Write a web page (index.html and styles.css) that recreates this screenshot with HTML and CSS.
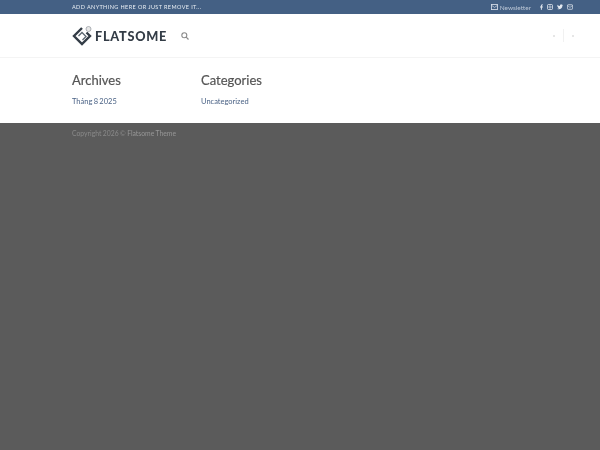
FILE: index.html
```html
<!DOCTYPE html>
<html lang="vi">
<head>
    <meta charset="UTF-8">
    <meta name="viewport" content="width=device-width, initial-scale=1.0">
    <title>Flatsome</title>
    <link rel="stylesheet" href="styles.css">
</head>
<body>
    <div class="top-bar">
        <div class="container top-inner">
            <span class="top-text">ADD ANYTHING HERE OR JUST REMOVE IT...</span>
            <div class="top-links">
                <svg class="top-icon" viewBox="0 0 8 7"><rect x="0.5" y="0.5" width="7" height="6" fill="none" stroke="currentColor"/><path d="M0.5 1.5 4 4 7.5 1.5" fill="none" stroke="currentColor" stroke-width="0.8"/></svg>
                <span class="newsletter">Newsletter</span>
                <div class="socials">
                    <svg class="social fb" viewBox="0 0 4 7"><path d="M1.2 7V4H0V2.8h1.2V1.7C1.2.6 1.9 0 2.8 0H4v1.2H3.2c-.5 0-.7.2-.7.7v.9H4L3.8 4H2.5v3z" fill="currentColor"/></svg>
                    <svg class="social" viewBox="0 0 7 7"><rect x="0.5" y="0.5" width="6" height="6" rx="1.5" fill="none" stroke="currentColor"/><circle cx="3.5" cy="3.5" r="1.3" fill="none" stroke="currentColor" stroke-width="0.8"/></svg>
                    <svg class="social" viewBox="0 0 8 7"><path d="M8 1c-.3.1-.6.2-.9.2.3-.2.6-.5.7-.9-.3.2-.6.3-1 .4A1.6 1.6 0 0 0 4 2.2C2.700 2.100 1.500 1.500.6.4c-.4.700-.2 1.600.5 2.100-.3 0-.5-.1-.7-.2 0 .8.5 1.400 1.300 1.600-.2.1-.5.1-.7 0 .2.600.8 1.100 1.500 1.100C1.800 5.600 1 5.900 0 5.800 3.400 7.900 7.300 5.500 7.200 1.800c.3-.2.600-.5.800-.8z" fill="currentColor"/></svg>
                    <svg class="social" viewBox="0 0 8 7"><rect x="0.5" y="0.5" width="7" height="6" rx="1" fill="none" stroke="currentColor"/><path d="M0.5 1.500 4 4 7.500 1.500" fill="none" stroke="currentColor" stroke-width="0.8"/></svg>
                </div>
            </div>
        </div>
    </div>

    <header class="header">
        <div class="container header-inner">
            <div class="logo">
                <svg class="logo-mark" viewBox="0 0 22 22">
                    <path d="M10 3 2 11l8 8 8-8-3.500-3.500" fill="none" stroke="#333c46" stroke-width="2.400"/>
                    <path d="M6.500 11 10 7.500l4 4-3.500 3.500" fill="none" stroke="#5a6570" stroke-width="1.300"/>
                    <circle cx="16.500" cy="4" r="2.500" fill="#e8e8e8" stroke="#9aa0a6" stroke-width="0.800"/>
                </svg>
                <span class="logo-text">FLATSOME</span>
            </div>
            <svg class="search" viewBox="0 0 8 8"><circle cx="3.300" cy="3.300" r="2.500" fill="none" stroke="#8a8a8a" stroke-width="1.100"/><path d="M5.200 5.200 7.500 7.500" stroke="#8a8a8a" stroke-width="1.200"/></svg>
            <div class="header-right">
                <span class="dot"></span>
                <span class="divider"></span>
                <span class="dot"></span>
            </div>
        </div>
    </header>

    <main class="container widgets">
        <section class="widget">
            <h3>Archives</h3>
            <a href="#">Tháng 8 2025</a>
        </section>
        <section class="widget">
            <h3>Categories</h3>
            <a href="#">Uncategorized</a>
        </section>
    </main>

    <footer class="footer">
        <div class="container">
            <p>Copyright 2026 © <span class="footer-name">Flatsome Theme</span></p>
        </div>
    </footer>
</body>
</html>
```
FILE: styles.css
```css
* { box-sizing: border-box; }
html, body { height: 100%; }
body {
    margin: 0;
    display: flex;
    flex-direction: column;
    background-color: #5b5b5b;
    font-family: Lato, "Liberation Sans", sans-serif;
}
.container { width: 100%; padding: 0 27px 0 72px; }

.top-bar { height: 14px; background-color: #446084; color: #fff; }
.top-inner { height: 14px; display: flex; align-items: center; justify-content: space-between; filter: blur(0.4px); }
.top-text { font-size: 5.500px; font-weight: 400; letter-spacing: 0.400px; color: #e8edf3; }
.top-links { display: flex; align-items: center; color: #d5dde7; }
.top-icon { width: 7px; height: 6px; margin-right: 2px; }
.newsletter { font-size: 6.500px; color: #b9c5d5; margin-right: 9px; }
.socials { display: flex; align-items: center; gap: 4px; color: #e3e8ef; }
.social { width: 6px; height: 6px; }
.social.fb { width: 3px; }

.header { height: 44px; background-color: #fff; border-bottom: 1px solid #f4f4f4; }
.header-inner { height: 43px; display: flex; align-items: center; filter: blur(0.4px); }
.logo { display: flex; align-items: center; gap: 1px; }
.logo-mark { width: 22px; height: 22px; }
.logo-text { font-size: 12.700px; font-weight: 900; letter-spacing: 0.750px; color: #333c46; }
.search { width: 8px; height: 8px; margin-left: 14px; }
.header-right { margin-left: auto; margin-right: -1px; display: flex; align-items: center; gap: 8px; }
.dot { width: 2px; height: 2px; background-color: #e6e6e6; }
.divider { width: 1px; height: 13px; background-color: #f1f1f1; }

.widgets { display: flex; padding-top: 14px; background-color: #fff; height: 65px; }
.widget { width: 129px; filter: blur(0.4px); }
.widget h3 { margin: 0 0 9px; font-size: 13px; line-height: 16px; font-weight: 400; color: #555; -webkit-text-stroke: 0.200px #555; }
.widget a { display: block; font-size: 7.500px; line-height: 10px; word-spacing: -0.600px; color: #4a6285; text-decoration: none; }

.footer { flex: 1; background-color: #5b5b5b; padding-top: 6px; }
.footer p { margin: 0; font-size: 6.800px; line-height: 9px; word-spacing: -0.300px; color: #8a8a8a; filter: blur(0.4px); }
.footer-name { color: #969696; }
```
